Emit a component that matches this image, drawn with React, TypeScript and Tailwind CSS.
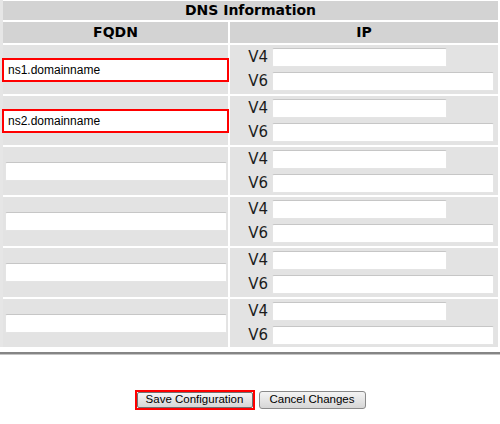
const rows = [
    { fqdn: 'ns1.domainname', marked: true },
    { fqdn: 'ns2.domainname', marked: true },
    { fqdn: '', marked: false },
    { fqdn: '', marked: false },
    { fqdn: '', marked: false },
    { fqdn: '', marked: false },
];

const inputBase =
    "h-[19px] bg-white border border-[#e4e4e4] border-t-[#c6c6c6] rounded-[2px] px-[3px] text-[12px] text-black font-['Liberation_Sans',Arial,sans-serif] focus:outline-none";

const IpLine = ({ label, width }: { label: string; width: string }) => (
    <div className="flex items-center">
        <span className="w-[38px] text-right text-[15px] leading-none text-[#1c1c1c] font-['DejaVu_Sans',sans-serif]">
            {label}
        </span>
        <input readOnly value="" className={`${inputBase} ml-[4px] ${width}`} />
    </div>
);

export default function App() {
    return (
        <div className="w-[500px] h-[424px] bg-white font-['Liberation_Sans',Arial,sans-serif]">
            <div className="flex">
                {/* thin left edge */}
                <div className="w-[3px] bg-[#e6e6e6]" />

                <div className="w-[495px] pt-[1px] grid grid-cols-[225px_268px] gap-[2px]">
                    {/* Title */}
                    <div className="col-span-2 h-[19px] bg-[#d3d3d3] flex items-center justify-center text-[14px] font-bold text-black font-['DejaVu_Sans',sans-serif]">
                        DNS Information
                    </div>

                    {/* Column headers */}
                    <div className="h-[21px] bg-[#d3d3d3] flex items-center justify-center text-[14px] font-bold text-black font-['DejaVu_Sans',sans-serif]">
                        FQDN
                    </div>
                    <div className="h-[21px] bg-[#d3d3d3] flex items-center justify-center text-[14px] font-bold text-black font-['DejaVu_Sans',sans-serif]">
                        IP
                    </div>

                    {/* Server rows */}
                    {rows.map((row, i) => {
                        const h = i % 3 === 2 ? 'h-[48px]' : 'h-[49px]';
                        return (
                            <div key={i} className="contents">
                                <div className={`${h} bg-[#e3e3e3] flex items-center`}>
                                    {row.marked ? (
                                        <div className="-ml-[1px] border-2 border-[#ff0000] bg-white">
                                            <input
                                                readOnly
                                                value={row.fqdn}
                                                className="block w-[223px] h-[20px] bg-white pl-[4px] text-[12px] text-black focus:outline-none"
                                            />
                                        </div>
                                    ) : (
                                        <input readOnly value="" className={`${inputBase} ml-[2px] w-[222px]`} />
                                    )}
                                </div>
                                <div className={`${h} bg-[#e3e3e3] flex flex-col justify-center gap-[5px]`}>
                                    <IpLine label="V4" width="w-[175px]" />
                                    <IpLine label="V6" width="w-[222px]" />
                                </div>
                            </div>
                        );
                    })}
                </div>
            </div>

            {/* divider */}
            <div className="mt-[5px] h-[3px] border-t-2 border-[#858585] bg-[#c4c4c4]" />

            {/* Actions */}
            <div className="mt-[35px] flex justify-center items-center gap-[4px]">
                <div className="border-2 border-[#ff0000]">
                    <button className="block w-[116px] h-[16px] rounded-[2px] border border-[#707070] bg-gradient-to-b from-[#f4f4f4] to-[#d6d6d6] text-[11.5px] text-black leading-none">
                        Save Configuration
                    </button>
                </div>
                <button className="w-[107px] h-[18px] rounded-[3px] border border-[#8a8a8a] bg-gradient-to-b from-[#f4f4f4] to-[#d6d6d6] text-[11.5px] text-black leading-none">
                    Cancel Changes
                </button>
            </div>
        </div>
    );
}
